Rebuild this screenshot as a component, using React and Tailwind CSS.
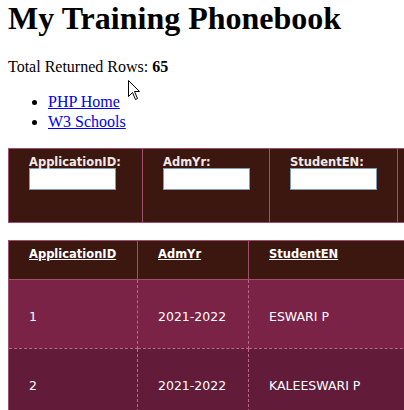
import React from "react";

const rows = [
  { id: "1", yr: "2021-2022", name: "ESWARI P", bg: "bg-[#7b2346]" },
  { id: "2", yr: "2021-2022", name: "KALEESWARI P", bg: "bg-[#621c3a]" },
];

const filters = ["ApplicationID:", "AdmYr:", "StudentEN:"];

function App() {
  return (
    <div className="relative w-[404px] h-[410px] overflow-hidden bg-white px-2 font-['Liberation_Serif',serif] text-black">
      <h1 className="m-0 text-[32px] font-bold leading-[1.15]">My Training Phonebook</h1>

      <p className="mt-[20px] text-base leading-[20px]">
        Total Returned Rows: <b>65</b>
      </p>

      <ul className="mt-[15px] list-disc pl-10 text-base leading-[20px]">
        <li>
          <a href="#" className="text-[#0000ee] underline">PHP Home</a>
        </li>
        <li>
          <a href="#" className="text-[#0000ee] underline">W3 Schools</a>
        </li>
      </ul>

      {/* search filters */}
      <table className="mt-[16px] w-[509px] table-fixed border-collapse border border-[#a0506e] bg-[#3b1710] font-['DejaVu_Sans',sans-serif]">
        <colgroup>
          <col className="w-[134px]" />
          <col className="w-[127px]" />
          <col className="w-[128px]" />
          <col className="w-[120px]" />
        </colgroup>
        <tbody>
          <tr>
            {filters.map((f) => (
              <td key={f} className="border border-[#a0506e] px-5 pt-[8px] pb-[32px] align-top">
                <label className="block text-[11.5px] font-bold leading-[11px] text-[#f3e9e6] whitespace-nowrap">
                  {f}
                </label>
                <input
                  type="text"
                  className="block h-[22px] w-[87px] border border-[#7f9db9] bg-white outline-none"
                />
              </td>
            ))}
            <td className="border border-[#a0506e] px-5 pt-[8px] pb-[32px] align-top">
              <div className="h-[33px]" />
            </td>
          </tr>
        </tbody>
      </table>

      {/* results */}
      <table className="mt-[17px] w-[440px] table-fixed border-collapse border border-[#a0506e] font-['DejaVu_Sans',sans-serif] text-white">
        <colgroup>
          <col className="w-[129px]" />
          <col className="w-[111px]" />
          <col className="w-[200px]" />
        </colgroup>
        <thead>
          <tr className="bg-[#3b1710]">
            {["ApplicationID", "AdmYr", "StudentEN"].map((h) => (
              <th
                key={h}
                className="border border-[#a0506e] px-5 pt-[6px] pb-[18px] text-left align-top text-[11.5px] font-bold leading-[14px]"
              >
                <a href="#" className="underline whitespace-nowrap">{h}</a>
              </th>
            ))}
          </tr>
        </thead>
        <tbody>
          {rows.map((r) => (
            <tr key={r.id} className={r.bg}>
              <td className="border-b border-l border-r border-dashed border-b-[#c0658a] border-r-[#c0658a] border-l-[#3b1710] px-5 pt-[29px] pb-[24px] text-[12.5px] leading-[15px]">
                {r.id}
              </td>
              <td className="border border-dashed border-[#c0658a] px-5 pt-[29px] pb-[24px] text-[12.5px] leading-[15px] whitespace-nowrap">
                {r.yr}
              </td>
              <td className="border border-dashed border-[#c0658a] px-5 pt-[29px] pb-[24px] text-[12.5px] leading-[15px] whitespace-nowrap">
                {r.name}
              </td>
            </tr>
          ))}
        </tbody>
      </table>

      {/* mouse pointer */}
      <svg
        className="absolute left-[128px] top-[80px]"
        width="13"
        height="21"
        viewBox="0 0 13 21"
      >
        <path
          d="M0.5 0.5 L0.5 16.5 L4.5 12.5 L7.5 19.5 L9.5 18.5 L6.5 11.5 L11.5 11.5 Z"
          fill="white"
          stroke="black"
          strokeWidth="1"
        />
      </svg>
    </div>
  );
}

export default App;
